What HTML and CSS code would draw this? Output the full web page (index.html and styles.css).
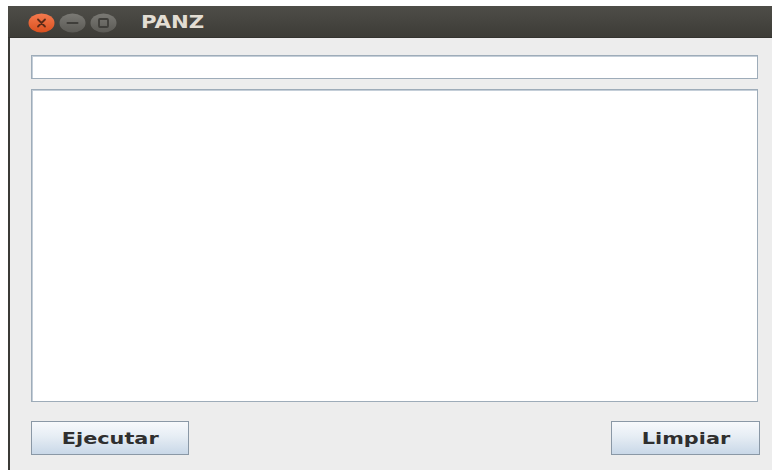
FILE: index.html
```html
<!DOCTYPE html>
<html lang="es">
<head>
<meta charset="utf-8">
<title>PANZ</title>
<link rel="stylesheet" href="styles.css">
</head>
<body>
<div class="window">
  <div class="titlebar">
    <div class="controls">
      <svg class="ctl" width="27" height="20" viewBox="0 0 27 20">
        <defs>
          <linearGradient id="gClose" x1="0" y1="0" x2="0" y2="1">
            <stop offset="0" stop-color="#f57a4e"/>
            <stop offset="1" stop-color="#d9501f"/>
          </linearGradient>
        </defs>
        <ellipse cx="13.5" cy="10" rx="13" ry="9.5" fill="url(#gClose)"/>
        <path d="M10 6.5 L17 13.5 M17 6.5 L10 13.5" stroke="#5a2a18" stroke-width="1.8" stroke-linecap="round"/>
      </svg>
      <svg class="ctl" width="27" height="20" viewBox="0 0 27 20">
        <defs>
          <linearGradient id="gGrey" x1="0" y1="0" x2="0" y2="1">
            <stop offset="0" stop-color="#7a7974"/>
            <stop offset="1" stop-color="#5b5a55"/>
          </linearGradient>
        </defs>
        <ellipse cx="13.5" cy="10" rx="13" ry="9.5" fill="url(#gGrey)"/>
        <path d="M8.5 10 H18.5" stroke="#3f3e3a" stroke-width="2" stroke-linecap="round"/>
      </svg>
      <svg class="ctl" width="27" height="20" viewBox="0 0 27 20">
        <ellipse cx="13.5" cy="10" rx="13" ry="9.5" fill="url(#gGrey)"/>
        <rect x="9" y="6" width="9" height="8" rx="1" fill="none" stroke="#3f3e3a" stroke-width="1.8"/>
      </svg>
    </div>
    <span class="title">PANZ</span>
  </div>
  <div class="content">
    <input class="field" type="text">
    <textarea class="area"></textarea>
    <div class="actions">
      <button class="btn"><span class="label">Ejecutar</span></button>
      <button class="btn"><span class="label">Limpiar</span></button>
    </div>
  </div>
</div>
</body>
</html>
```
FILE: styles.css
```css
html, body {
  margin: 0;
  padding: 0;
  background: #ffffff;
  height: 100%;
  overflow: hidden;
}

.window {
  margin: 6px 0 0 8px;
  height: 464px;
  display: flex;
  flex-direction: column;
  font-family: "DejaVu Sans", "Liberation Sans", sans-serif;
}

.titlebar {
  height: 32px;
  flex: none;
  display: flex;
  align-items: center;
  padding-left: 20px;
  background: linear-gradient(#4e4d48, #3d3c37);
  border-bottom: 1px solid #34332f;
  box-sizing: border-box;
}

.controls {
  display: flex;
  gap: 4px;
  margin-top: 2px;
}

.ctl {
  display: block;
}

.title {
  margin-left: 24px;
  color: #e2ddd3;
  font-weight: bold;
  font-size: 17px;
  display: inline-block;
  transform: scaleX(1.25);
  transform-origin: left center;
  margin-top: 1px;
}

.content {
  flex: 1;
  display: flex;
  flex-direction: column;
  background: #ededed;
  border-left: 2px solid #3b3a36;
  padding: 17px 12px 0 21px;
}

.field,
.area {
  display: block;
  margin: 0 2px 0 0;
  padding: 0;
  background: #ffffff;
  border: 1px solid #9eacb9;
  box-shadow: inset 1px 1px 0 #c4ced8;
  box-sizing: border-box;
  outline: none;
  resize: none;
}

.field {
  height: 24px;
}

.area {
  margin-top: 10px;
  height: 313px;
}

.actions {
  display: flex;
  justify-content: space-between;
  margin-top: 19px;
}

.btn {
  height: 34px;
  width: 158px;
  padding: 0;
  border: 1px solid #8a98a6;
  background: linear-gradient(#f7f9fc, #e6edf4 45%, #c9d8e8);
  display: flex;
  align-items: center;
  justify-content: center;
  font-family: "DejaVu Sans", "Liberation Sans", sans-serif;
  font-weight: bold;
  font-size: 16px;
  color: #2f2f2f;
}

.btn + .btn {
  width: 149px;
}

.label {
  display: inline-block;
  transform: scaleX(1.3);
}
```
